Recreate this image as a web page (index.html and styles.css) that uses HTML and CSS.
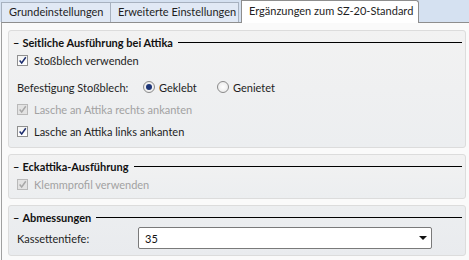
FILE: index.html
```html
<!DOCTYPE html>
<html>
<head lang="de">
  <meta charset="UTF-8">
  <title>Ergänzungen</title>
  <link rel="stylesheet" href="styles.css">
</head>
<body>
<div class="tabs">
  <div class="tab t1">Grundeinstellungen</div>
  <div class="tab t2">Erweiterte Einstellungen</div>
  <div class="tab t3 active">Ergänzungen zum SZ-20-Standard</div>
</div>
<div class="page">
  <!--Seitliche Ausführung-->
  <div class="group g1">
    <div class="legend"><span class="dash">–</span><span class="title">Seitliche Ausführung bei Attika</span><span class="rule"></span></div>
    <div class="row first">
      <span class="box on"><svg viewBox="0 0 11 11"><path d="M2 5.5 L4.5 8.5 L9.5 1.5" /></svg></span>Stoßblech verwenden
    </div>
    <div class="row radios">
      <span class="lbl">Befestigung Stoßblech:</span>
      <span class="opt"><span class="radio on"></span>Geklebt</span>
      <span class="opt"><span class="radio"></span>Genietet</span>
    </div>
    <div class="row off">
      <span class="box dis"><svg viewBox="0 0 11 11"><path d="M2 5.5 L4.5 8.5 L9.5 1.5" /></svg></span>Lasche an Attika rechts ankanten
    </div>
    <div class="row">
      <span class="box on"><svg viewBox="0 0 11 11"><path d="M2 5.5 L4.5 8.5 L9.5 1.5" /></svg></span>Lasche an Attika links ankanten
    </div>
  </div>
  <!--Eckattika-->
  <div class="group g2">
    <div class="legend"><span class="dash">–</span><span class="title">Eckattika-Ausführung</span><span class="rule"></span></div>
    <div class="row first off">
      <span class="box dis"><svg viewBox="0 0 11 11"><path d="M2 5.5 L4.5 8.5 L9.5 1.5" /></svg></span>Klemmprofil verwenden
    </div>
  </div>
  <!--Abmessungen-->
  <div class="group g3">
    <div class="legend"><span class="dash">–</span><span class="title">Abmessungen</span><span class="rule"></span></div>
    <div class="row sel">
      <span class="lbl">Kassettentiefe:</span>
      <div class="select"><span>35</span><span class="arrow"></span></div>
    </div>
  </div>
</div>
</body>
</html>
```

FILE: styles.css
```css
* {
  margin: 0;
  padding: 0;
  box-sizing: border-box;
}

body {
  font-family: Lato, "Liberation Sans", sans-serif;
  font-size: 11px;
  color: #1e1e1e;
  background-color: #fafafa;
  width: 469px;
  height: 260px;
  overflow: hidden;
}

/*Reiter oben*/
.tabs {
  display: flex;
  align-items: flex-end;
  height: 22px;
  padding-left: 1px;
  background-color: #d5e1f1;
}

.tab {
  height: 20px;
  line-height: 18px;
  padding-left: 7px;
  border: 1px solid #a7b1bf;
  border-bottom: none;
  background-color: #e1e9f5;
  white-space: nowrap;
}

.t1 {
  width: 110px;
}

.t2 {
  width: 129px;
  margin-left: -1px;
}

.tab.active {
  width: 178px;
  height: 23px;
  margin-left: 2px;
  margin-bottom: -1px;
  line-height: 20px;
  border-color: #8e8e8e;
  border-radius: 0 3px 0 0;
  background-color: #fff;
  position: relative;
}

.page {
  height: 238px;
  margin-left: 1px;
  padding: 7px 3px 0 6px;
  border-top: 1px solid #8e8e8e;
  border-left: 1px solid #a0a0a0;
  background-color: #fafafa;
}

/*Gruppen*/
.group {
  margin-bottom: 6px;
  padding: 3px 0 0 8px;
  border: 1px solid #dcdcdc;
  border-radius: 3px;
  background: linear-gradient(#f2f2f2, #eceef0);
}

.g1 {
  padding-bottom: 5px;
}

.g2 {
  padding-bottom: 4px;
}

.g3 {
  padding-bottom: 6px;
  background: linear-gradient(#eceef0, #e9ebee);
}

.legend {
  display: flex;
  align-items: center;
  height: 16px;
  margin-left: -4px;
  padding-right: 3px;
  font-weight: bold;
  color: #111;
}

.legend .dash {
  margin-right: 3px;
}

.legend .rule {
  flex: 1;
  height: 1px;
  margin-left: 5px;
  background-color: #000;
}

.row {
  display: flex;
  align-items: center;
  height: 22px;
}

.row.first {
  height: 20px;
}

.row.radios {
  margin-top: 6px;
}

.row.off {
  color: #a2a2a2;
}

.box {
  width: 11px;
  height: 11px;
  margin-right: 6px;
  border: 1px solid #8f8f8f;
  background: linear-gradient(#f4f4f4, #ffffff);
  display: flex;
}

.box svg {
  width: 9px;
  height: 9px;
  fill: none;
  stroke-width: 1.8;
  stroke: #1c2d6e;
}

.box.dis {
  border-color: #b9b9b9;
  background: #e3e3e3;
}

.box.dis svg {
  stroke: #a8a8a8;
}

.lbl {
  width: 126px;
}

.opt {
  display: flex;
  align-items: center;
  width: 74px;
}

.radio {
  width: 12px;
  height: 12px;
  margin-right: 4px;
  border: 1px solid #8a8a8a;
  border-radius: 50%;
  background: radial-gradient(#ffffff, #e6e6e6);
  display: flex;
  align-items: center;
  justify-content: center;
}

.radio.on::after {
  content: "";
  width: 6px;
  height: 6px;
  border-radius: 50%;
  background-color: #1d3577;
}

.row.sel {
  margin-top: 2px;
}

.row.sel .lbl {
  width: 121px;
}

.select {
  width: 294px;
  height: 22px;
  display: flex;
  align-items: center;
  justify-content: space-between;
  padding: 0 4px 0 6px;
  border: 1px solid #7a7a7a;
  border-radius: 2px;
  background-color: #fff;
  color: #111;
}

.arrow {
  width: 0;
  height: 0;
  border-left: 4px solid transparent;
  border-right: 4px solid transparent;
  border-top: 4px solid #111;
}
```
